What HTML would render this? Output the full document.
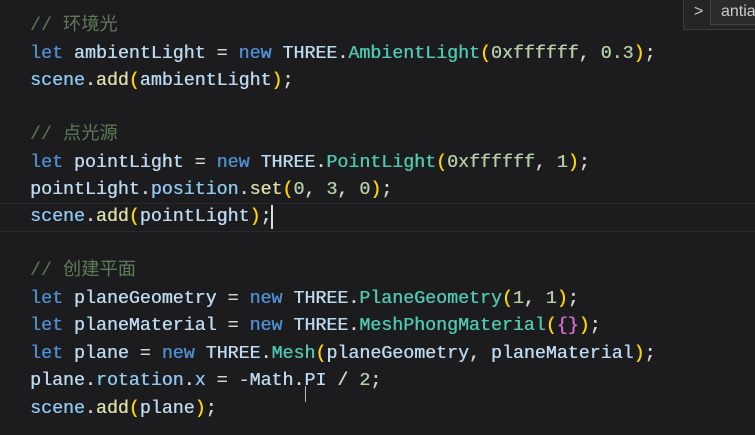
<!DOCTYPE html>
<html><head><meta charset="utf-8"><style>
body{margin:0;width:755px;height:435px;background:#1c1c1f;overflow:hidden;position:relative;font-family:"Liberation Mono","Noto Sans CJK SC",monospace;font-size:18.3px;}
.l{position:absolute;left:30px;white-space:pre;line-height:27px;color:#d4d4d4;text-shadow:0.4px 0 0 currentColor;}
.k{color:#4f8fcf}.v{color:#bcd9f0}.c{color:#4ec9b0}.f{color:#dcdcaa}.n{color:#b5cea8}.p{color:#ffd700}.q{color:#da70d6}.cm{color:#5f7a58;text-shadow:none}.pr{color:#8cc8f0}
.hl{position:absolute;left:0;top:203px;width:755px;height:27px;border-top:1px solid #2a2a2e;border-bottom:1px solid #2a2a2e;}
.cur{position:absolute;left:271px;top:205px;width:2px;height:24px;background:#ddd}
.w{position:absolute;left:683px;top:-2px;width:80px;height:30px;background:#252528;border:1px solid #3a3a3d;font-family:"Liberation Sans",sans-serif;color:#ccc;font-size:16px}
</style></head><body>
<div class="hl"></div>
<div class="l cm" style="top:13px">// 环境光</div>
<div class="l" style="top:41px"><span class="k">let</span> <span class="v">ambientLight</span> = <span class="k">new</span> <span class="v">THREE</span>.<span class="c">AmbientLight</span><span class="p">(</span><span class="n">0xffffff</span>, <span class="n">0.3</span><span class="p">)</span>;</div>
<div class="l" style="top:68px"><span class="pr">scene</span>.<span class="f">add</span><span class="p">(</span><span class="v">ambientLight</span><span class="p">)</span>;</div>
<div class="l cm" style="top:122px">// 点光源</div>
<div class="l" style="top:150px"><span class="k">let</span> <span class="v">pointLight</span> = <span class="k">new</span> <span class="v">THREE</span>.<span class="c">PointLight</span><span class="p">(</span><span class="n">0xffffff</span>, <span class="n">1</span><span class="p">)</span>;</div>
<div class="l" style="top:177px"><span class="v">pointLight</span>.<span class="pr">position</span>.<span class="f">set</span><span class="p">(</span><span class="n">0</span>, <span class="n">3</span>, <span class="n">0</span><span class="p">)</span>;</div>
<div class="l" style="top:204px"><span class="pr">scene</span>.<span class="f">add</span><span class="p">(</span><span class="v">pointLight</span><span class="p">)</span>;</div>
<div class="cur"></div>
<div class="l cm" style="top:258px">// 创建平面</div>
<div class="l" style="top:286px"><span class="k">let</span> <span class="v">planeGeometry</span> = <span class="k">new</span> <span class="v">THREE</span>.<span class="c">PlaneGeometry</span><span class="p">(</span><span class="n">1</span>, <span class="n">1</span><span class="p">)</span>;</div>
<div class="l" style="top:313px"><span class="k">let</span> <span class="v">planeMaterial</span> = <span class="k">new</span> <span class="v">THREE</span>.<span class="c">MeshPhongMaterial</span><span class="p">(</span><span class="q">{}</span><span class="p">)</span>;</div>
<div class="l" style="top:341px"><span class="k">let</span> <span class="v">plane</span> = <span class="k">new</span> <span class="v">THREE</span>.<span class="c">Mesh</span><span class="p">(</span><span class="v">planeGeometry</span>, <span class="v">planeMaterial</span><span class="p">)</span>;</div>
<div class="l" style="top:368px"><span class="v">plane</span>.<span class="pr">rotation</span>.<span class="pr">x</span> = -<span class="v">Math</span>.<span class="v">PI</span> / <span class="n">2</span>;</div>
<div class="l" style="top:396px"><span class="pr">scene</span>.<span class="f">add</span><span class="p">(</span><span class="v">plane</span><span class="p">)</span>;</div>
<div style="position:absolute;left:305px;top:386px;width:1px;height:16px;background:#bbb"></div>
<div class="w"><span style="position:absolute;left:10px;top:4px">&gt;</span><div style="position:absolute;left:26px;top:0;width:60px;height:24px;border:1px solid #444;background:#2b2b2e"><span style="position:absolute;left:10px;top:3px">antia</span></div></div>
</body></html>
